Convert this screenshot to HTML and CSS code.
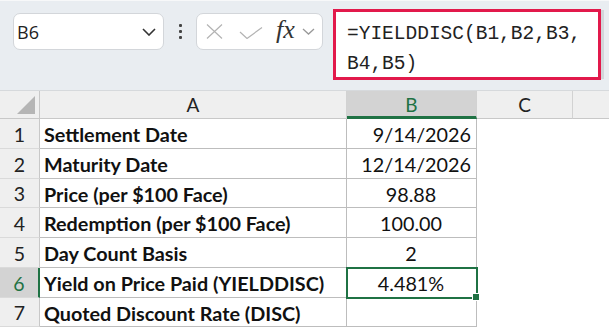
FILE: index.html
```html
<!DOCTYPE html>
<html lang="en">
  <head>
    <meta charset="UTF-8">
    <title>YIELDDISC</title>
    <link rel="stylesheet" href="styles.css">
  </head>
  <body>
    <div class="toolbar">
      <div class="name-box">
        <span>B6</span>
        <svg class="chev" width="14" height="8" viewBox="0 0 14 8"><path d="M1 1 L7 7 L13 1" fill="none" stroke="#333" stroke-width="1.6"/></svg>
      </div>
      <div class="dots"><i></i><i></i><i></i></div>
      <div class="fx-box">
        <svg width="17" height="15" viewBox="0 0 17 15"><path d="M1 0.5 L16 14.5 M16 0.5 L1 14.5" fill="none" stroke="#b3b3b3" stroke-width="1.2"/></svg>
        <svg width="24" height="12" viewBox="0 0 24 12"><path d="M1 5 L8 11.5 L23 0.5" fill="none" stroke="#b3b3b3" stroke-width="1.2"/></svg>
        <span class="fx">fx</span>
        <svg width="13" height="7" viewBox="0 0 13 7"><path d="M1 1 L6.5 6 L12 1" fill="none" stroke="#999" stroke-width="1.3"/></svg>
      </div>
      <div class="formula">=YIELDDISC(B1,B2,B3,<br>B4,B5)</div>
    </div>

    <div class="sheet">
      <div class="corner"><span class="tri"></span></div>
      <div class="col-head">A</div>
      <div class="col-head active">B</div>
      <div class="col-head">C</div>
      <div class="col-head last"></div>

      <div class="row-head">1</div>
      <div class="cell label">Settlement Date</div>
      <div class="cell right">9/14/2026</div>
      <div class="blank"></div><div class="blank"></div>

      <div class="row-head">2</div>
      <div class="cell label">Maturity Date</div>
      <div class="cell right">12/14/2026</div>
      <div class="blank"></div><div class="blank"></div>

      <div class="row-head short">3</div>
      <div class="cell label">Price (per $100 Face)</div>
      <div class="cell center">98.88</div>
      <div class="blank"></div><div class="blank"></div>

      <div class="row-head">4</div>
      <div class="cell label">Redemption (per $100 Face)</div>
      <div class="cell center">100.00</div>
      <div class="blank"></div><div class="blank"></div>

      <div class="row-head">5</div>
      <div class="cell label">Day Count Basis</div>
      <div class="cell center">2</div>
      <div class="blank"></div><div class="blank"></div>

      <div class="row-head active">6</div>
      <div class="cell label">Yield on Price Paid (YIELDDISC)</div>
      <div class="cell center selected">4.481%</div>
      <div class="blank"></div><div class="blank"></div>

      <div class="row-head">7</div>
      <div class="cell label">Quoted Discount Rate (DISC)</div>
      <div class="cell center"></div>
      <div class="blank"></div><div class="blank"></div>
    </div>
  </body>
</html>
```

FILE: styles.css
```css
body, html {
  margin: 0;
  padding: 0;
  width: 609px;
  height: 328px;
  overflow: hidden;
  background: #fff;
  font-family: Lato, 'Liberation Sans', sans-serif;
  color: #111;
}

.toolbar {
  background-color: #e9edf1;
  border-top: 1px solid #f7f8f9;
  border-bottom: 1px solid #d6d9dc;
  display: flex;
  align-items: flex-start;
  padding: 8px 0 0 13px;
  box-sizing: border-box;
  height: 91px;
}

.name-box {
  margin-top: 4px;
  width: 151px;
  height: 37px;
  box-sizing: border-box;
  background: #fff;
  border: 1px solid #d3d6da;
  border-radius: 7px;
  display: flex;
  align-items: center;
  justify-content: space-between;
  padding: 0 7px 0 3px;
  font-family: 'Open Sans', 'Noto Sans', sans-serif;
  font-size: 18px;
  color: #222;
}

.dots {
  width: 16px;
  margin: 4px 8px 0 8px;
  height: 37px;
  display: flex;
  flex-direction: column;
  align-items: center;
  justify-content: center;
  gap: 3px;
}

.dots i {
  width: 3px;
  height: 3px;
  background: #444;
  border-radius: 1px;
}

.fx-box {
  margin-top: 4px;
  width: 127px;
  height: 37px;
  box-sizing: border-box;
  background: #fff;
  border: 1px solid #d3d6da;
  border-radius: 7px;
  display: flex;
  align-items: center;
  padding: 0 0 0 9px;
}

.fx-box svg:nth-child(1) { margin-right: 16px; }
.fx-box svg:nth-child(2) { margin-right: 13px; margin-top: 2px; }

.fx {
  font-family: 'Liberation Serif', 'DejaVu Serif', serif;
  font-style: italic;
  font-size: 26px;
  color: #333;
  margin-right: 7px;
  line-height: 1;
  margin-top: -3px;
}

.formula {
  margin-left: 10px;
  width: 268px;
  height: 71px;
  box-sizing: border-box;
  background: #fff;
  border: 3px solid #e2194b;
  padding: 7px 0 0 11px;
  font-family: 'Liberation Mono', 'DejaVu Sans Mono', monospace;
  font-size: 19.5px;
  line-height: 30px;
  color: #222;
  box-shadow: 4px 0 0 -1px #d3d6da;
}

.sheet {
  display: grid;
  grid-template-columns: 40px 307px 130px 96px 1fr;
  grid-template-rows: 28px 30px 30px 29px 30px 30px 30px 29px;
  font-size: 19.8px;
}

.corner, .col-head {
  background: #efefef;
  border-bottom: 1px solid #c8c8c8;
  border-right: 1px solid #d2d2d2;
  box-sizing: border-box;
  display: flex;
  align-items: center;
  justify-content: center;
  font-size: 19px;
  color: #222;
}

.corner {
  border-right: 1px solid #c8c8c8;
  position: relative;
}

.tri {
  position: absolute;
  right: 4px;
  bottom: 4px;
  width: 0;
  height: 0;
  border-left: 18px solid transparent;
  border-bottom: 18px solid #b5b5b5;
}

.col-head.active {
  background: #d3d3d3;
  color: #1f7244;
  border-bottom: 3px solid #1f7244;
  padding-top: 2px;
}

.col-head.last {
  border-right: none;
}

.row-head {
  background: #efefef;
  border-right: 1px solid #c8c8c8;
  border-bottom: 1px solid #dadada;
  box-sizing: border-box;
  display: flex;
  align-items: center;
  justify-content: center;
  font-size: 19.5px;
  color: #222;
  padding-top: 1px;
}

.row-head.active {
  background: #d3d3d3;
  color: #1f7244;
  border-right: 2px solid #1f7244;
}

.cell {
  border-right: 1px solid #bdbdbd;
  border-bottom: 1px solid #bdbdbd;
  box-sizing: border-box;
  display: flex;
  align-items: center;
  padding: 1px 5px 0 4px;
  white-space: nowrap;
}

.label {
  font-weight: bold;
}

.right {
  justify-content: flex-end;
}

.center {
  justify-content: center;
}

.selected {
  position: relative;
  outline: 2px solid #1f7244;
  outline-offset: -1px;
}

.selected::after {
  content: '';
  position: absolute;
  right: -4px;
  bottom: -4px;
  width: 6px;
  height: 6px;
  background: #1f7244;
  border: 1px solid #fff;
}

.blank {
  background: #fff;
}
```
